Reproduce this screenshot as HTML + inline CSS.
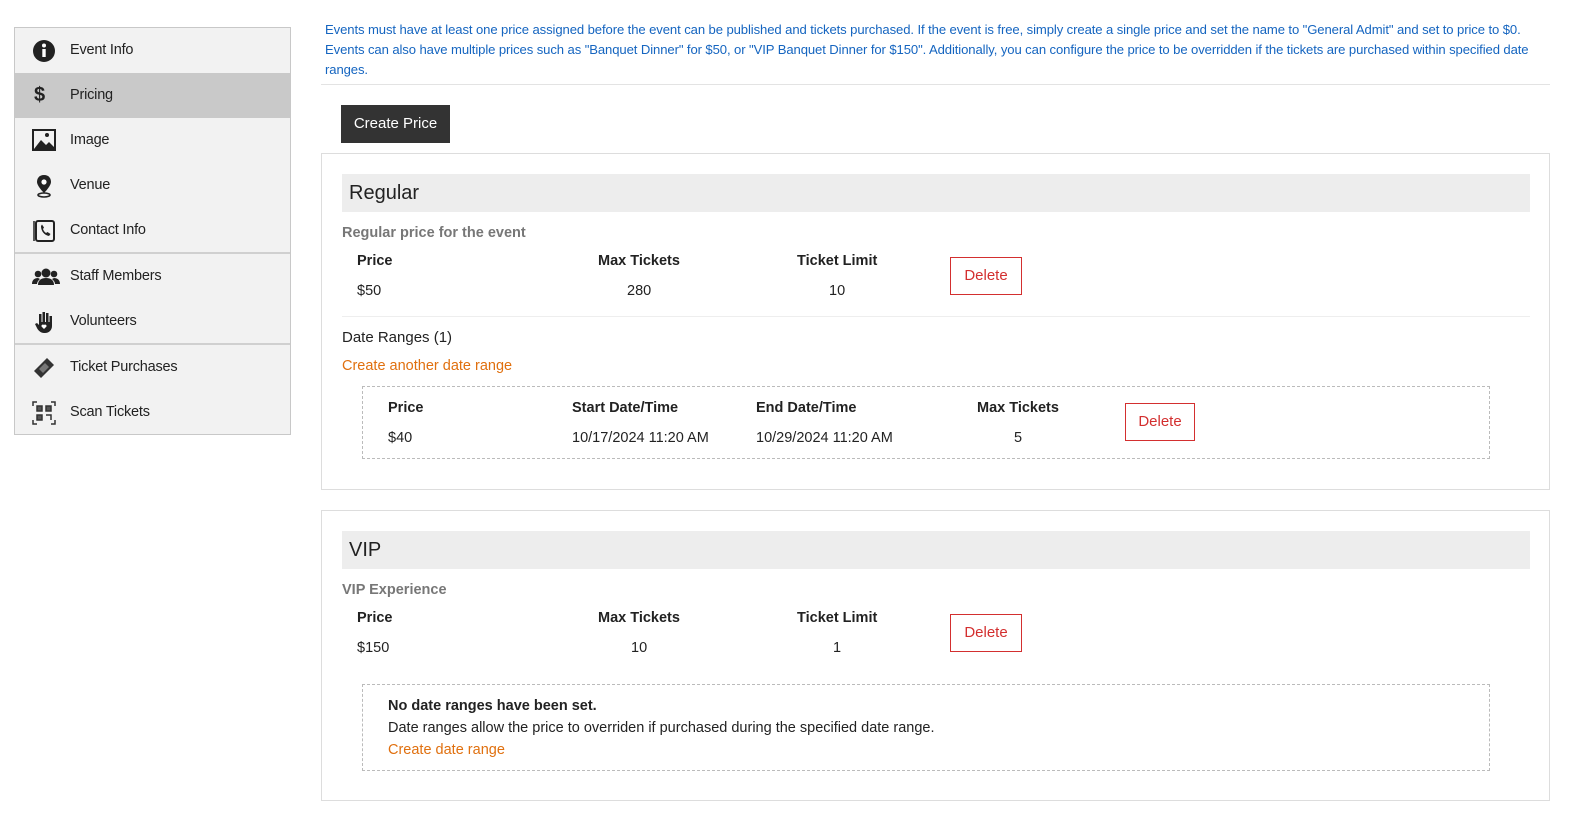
<!DOCTYPE html>
<html><head><style>
*{box-sizing:border-box;margin:0;padding:0}
body{width:1582px;height:827px;background:#fff;font-family:"Liberation Sans",sans-serif;color:#222;position:relative;overflow:hidden}
.a{position:absolute;white-space:nowrap}
.nav{position:absolute;left:14px;top:27px;width:277px;height:408px;background:#f2f2f2;border:1px solid #c8c8c8}
.item{position:absolute;left:0;width:275px;height:45px;font-size:14.5px;line-height:45px;padding-left:55px;letter-spacing:-.2px}
.item svg{position:absolute;left:17px;top:11px}
.sep{position:absolute;left:0;width:275px;height:2px;background:#d0d0d0}
.info{left:325px;top:20px;font-size:13.1px;line-height:20px;color:#1565c0;white-space:normal;width:1225px;letter-spacing:-.1px}
.card{position:absolute;left:321px;width:1229px;border:1px solid #ddd}
.hd{position:absolute;left:20px;width:1188px;height:38px;background:#ededed;font-size:20px;line-height:38px;padding-left:7px;color:#222}
.b{font-weight:bold;font-size:14.5px}
.t{font-size:14.5px}
.del{position:absolute;border:1px solid #d32f2f;color:#d32f2f;font-size:15px;text-align:center;line-height:36px;width:72px;height:38px}
.dash{position:absolute;border:1px dashed #bbb}
.org{color:#e0700f;font-size:14.5px}
</style></head><body>
<div class="nav">
 <div class="item" style="top:0">
  <svg width="24" height="24" viewBox="0 0 24 24"><circle cx="12" cy="12" r="11" fill="#222"/><rect x="10.3" y="10" width="3.4" height="8" fill="#fff"/><circle cx="12" cy="6.5" r="2" fill="#fff"/></svg>Event Info</div>
 <div class="item" style="top:45px;background:#c9c9c9"><span style="position:absolute;left:19px;top:0;font-weight:bold;font-size:20px">$</span>Pricing</div>
 <div class="item" style="top:90px"><svg width="24" height="22" viewBox="0 0 24 22"><rect x="1" y="1" width="22" height="20" fill="none" stroke="#222" stroke-width="2"/><path d="M2 20 L9 11 L14 16 L17 13 L22 18 V20Z" fill="#222"/><circle cx="15" cy="6" r="2" fill="#222"/></svg>Image</div>
 <div class="item" style="top:135px"><svg width="24" height="24" viewBox="0 0 24 24"><path d="M12 1 C7 1 5 4.5 5 8 C5 12 12 19 12 19 C12 19 19 12 19 8 C19 4.5 17 1 12 1Z" fill="#222"/><circle cx="12" cy="8" r="2.6" fill="#fff"/><ellipse cx="12" cy="21" rx="6" ry="2" fill="none" stroke="#222" stroke-width="1.6"/></svg>Venue</div>
 <div class="item" style="top:180px"><svg width="24" height="24" viewBox="0 0 24 24"><rect x="4" y="2" width="18" height="20" rx="2" fill="none" stroke="#222" stroke-width="2"/><path d="M2 2v20" stroke="#222" stroke-width="1.5"/><path d="M9 7c0 5 3 9 8 10l1.5-2-3-2-1.5 1c-1.5-1-2.5-2.5-3-4l1-1.5-2-3z" fill="#222"/></svg>Contact Info</div>
 <div class="sep" style="top:224px"></div>
 <div class="item" style="top:226px"><svg width="28" height="24" viewBox="0 0 28 24"><circle cx="14" cy="8" r="4.5" fill="#222"/><circle cx="6" cy="9" r="3.3" fill="#222"/><circle cx="22" cy="9" r="3.3" fill="#222"/><path d="M6 20c0-5 3.5-7 8-7s8 2 8 7z" fill="#222"/><path d="M0 19c0-4 2.5-6 6-6l2 1c-2 1.5-3 3.5-3 5z M28 19c0-4-2.5-6-6-6l-2 1c2 1.5 3 3.5 3 5z" fill="#222"/></svg>Staff Members</div>
 <div class="item" style="top:271px"><svg width="24" height="24" viewBox="0 0 24 24"><path d="M7 4h2.5v8h1V2h2.5v10h1V3h2.5v9h1V6h2.5v10c0 4-3 7-7 7h-1c-3 0-5-2-6.5-4L3 14l2-1 2 2z" fill="#222"/><path d="M12 19l-2.5-2.5a1.5 1.5 0 0 1 2.5-1.5 1.5 1.5 0 0 1 2.5 1.5z" fill="#fff"/></svg>Volunteers</div>
 <div class="sep" style="top:315px"></div>
 <div class="item" style="top:317px"><svg width="24" height="24" viewBox="0 0 24 24"><path d="M15 2l7 7-13 13-7-7z" fill="#333"/><path d="M13 7l4 4-6 6-4-4z" fill="#777"/></svg>Ticket Purchases</div>
 <div class="item" style="top:362px"><svg width="24" height="24" viewBox="0 0 24 24" fill="none" stroke="#333" stroke-width="1.5"><path d="M1 5V1h4M19 1h4v4M23 19v4h-4M5 23H1v-4"/><rect x="5" y="5" width="5" height="5" fill="#555"/><rect x="14" y="5" width="5" height="5" fill="#555"/><rect x="5" y="14" width="5" height="5" fill="#555"/><path d="M14 14h5v5"/></svg>Scan Tickets</div>
</div>

<div class="a info">Events must have at least one price assigned before the event can be published and tickets purchased. If the event is free, simply create a single price and set the name to "General Admit" and set to price to $0. Events can also have multiple prices such as "Banquet Dinner" for $50, or "VIP Banquet Dinner for $150". Additionally, you can configure the price to be overridden if the tickets are purchased within specified date ranges.</div>
<div class="a" style="left:321px;top:84px;width:1229px;height:1px;background:#e3e3e3"></div>
<div class="a" style="left:341px;top:105px;width:109px;height:38px;background:#333;color:#fff;font-size:15px;line-height:38px;text-align:center">Create Price</div>

<div class="card" style="top:153px;height:337px">
 <div class="hd" style="top:20px">Regular</div>
 <div class="a t" style="left:20px;top:71px;color:#777;font-weight:bold">Regular price for the event</div>
 <div class="a b" style="left:35px;top:99px">Price</div>
 <div class="a b" style="left:276px;top:99px">Max Tickets</div>
 <div class="a b" style="left:475px;top:99px">Ticket Limit</div>
 <div class="a t" style="left:35px;top:129px">$50</div>
 <div class="a t" style="left:305px;top:129px">280</div>
 <div class="a t" style="left:507px;top:129px">10</div>
 <div class="del" style="left:628px;top:103px">Delete</div>
 <div class="a" style="left:20px;top:162px;width:1188px;height:1px;background:#eee"></div>
 <div class="a b" style="left:20px;top:175px;font-weight:normal;font-size:15px">Date Ranges (1)</div>
 <div class="a org" style="left:20px;top:204px">Create another date range</div>
 <div class="dash" style="left:40px;top:232px;width:1128px;height:73px">
  <div class="a b" style="left:25px;top:13px">Price</div>
  <div class="a b" style="left:209px;top:13px">Start Date/Time</div>
  <div class="a b" style="left:393px;top:13px">End Date/Time</div>
  <div class="a b" style="left:614px;top:13px">Max Tickets</div>
  <div class="a t" style="left:25px;top:43px">$40</div>
  <div class="a t" style="left:209px;top:43px">10/17/2024 11:20 AM</div>
  <div class="a t" style="left:393px;top:43px">10/29/2024 11:20 AM</div>
  <div class="a t" style="left:651px;top:43px">5</div>
  <div class="del" style="left:762px;top:16px;width:70px">Delete</div>
 </div>
</div>

<div class="card" style="top:510px;height:291px">
 <div class="hd" style="top:20px">VIP</div>
 <div class="a t" style="left:20px;top:71px;color:#777;font-weight:bold">VIP Experience</div>
 <div class="a b" style="left:35px;top:99px">Price</div>
 <div class="a b" style="left:276px;top:99px">Max Tickets</div>
 <div class="a b" style="left:475px;top:99px">Ticket Limit</div>
 <div class="a t" style="left:35px;top:129px">$150</div>
 <div class="a t" style="left:309px;top:129px">10</div>
 <div class="a t" style="left:511px;top:129px">1</div>
 <div class="del" style="left:628px;top:103px">Delete</div>
 <div class="dash" style="left:40px;top:173px;width:1128px;height:87px">
  <div class="a b" style="left:25px;top:13px">No date ranges have been set.</div>
  <div class="a t" style="left:25px;top:35px">Date ranges allow the price to overriden if purchased during the specified date range.</div>
  <div class="a org" style="left:25px;top:57px">Create date range</div>
 </div>
</div>
</body></html>
